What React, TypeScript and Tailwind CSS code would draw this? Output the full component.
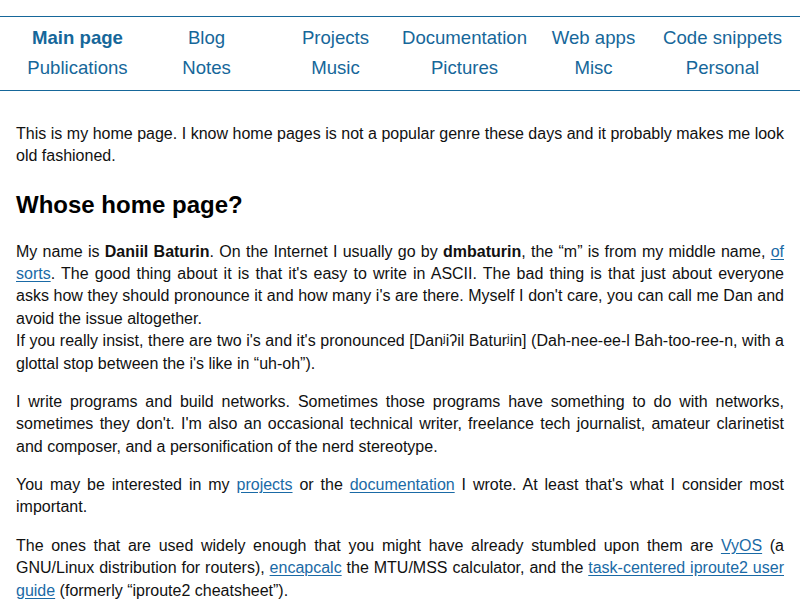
const navRows = [
  ["Main page", "Blog", "Projects", "Documentation", "Web apps", "Code snippets"],
  ["Publications", "Notes", "Music", "Pictures", "Misc", "Personal"],
];

function A({ children }: { children: React.ReactNode }) {
  return (
    <a href="#" className="text-[#1a6aa6] underline underline-offset-2">
      {children}
    </a>
  );
}

export default function App() {
  return (
    <div className="min-h-screen bg-white text-[#111] font-['Liberation_Sans',Arial,sans-serif]">
      <nav className="mt-4 border-y border-[#16679a] px-[13px] pt-[6px] pb-[7px]">
        {navRows.map((row, i) => (
          <div key={i} className="grid grid-cols-6 text-center text-[18.6px] leading-[30px]">
            {row.map((item) => (
              <a
                key={item}
                href="#"
                className={
                  item === "Main page"
                    ? "font-bold text-[#16679a]"
                    : "text-[#16679a]"
                }
              >
                {item}
              </a>
            ))}
          </div>
        ))}
      </nav>

      <main className="px-4 text-[16px] leading-[1.4] text-justify">
        <p className="mt-[32px]">
          This is my home page. I know home pages is not a popular genre these days and it
          probably makes me look old fashioned.
        </p>

        <h2 className="mt-[23px] mb-[21px] text-[24px] font-bold leading-[1.2] text-black">
          Whose home page?
        </h2>

        <p>
          My name is <b>Daniil Baturin</b>. On the Internet I usually go by{" "}
          <b>dmbaturin</b>, the “m” is from my middle name, <A>of sorts</A>. The good thing
          about it is that it's easy to write in ASCII. The bad thing is that just about
          everyone asks how they should pronounce it and how many i's are there. Myself I
          don't care, you can call me Dan and avoid the issue altogether.
          <br />
          If you really insist, there are two i's and it's pronounced [Danʲiʔil Baturʲin]
          (Dah-nee-ee-l Bah-too-ree-n, with a glottal stop between the i's like in “uh-oh”).
        </p>

        <p className="mt-4">
          I write programs and build networks. Sometimes those programs have something to do
          with networks, sometimes they don't. I'm also an occasional technical writer,
          freelance tech journalist, amateur clarinetist and composer, and a personification
          of the nerd stereotype.
        </p>

        <p className="mt-4">
          You may be interested in my <A>projects</A> or the <A>documentation</A> I wrote. At
          least that's what I consider most important.
        </p>

        <p className="mt-4">
          The ones that are used widely enough that you might have already stumbled upon them
          are <A>VyOS</A> (a GNU/Linux distribution for routers), <A>encapcalc</A> the MTU/MSS
          calculator, and the <A>task-centered iproute2 user guide</A> (formerly “iproute2
          cheatsheet”).
        </p>
      </main>
    </div>
  );
}
